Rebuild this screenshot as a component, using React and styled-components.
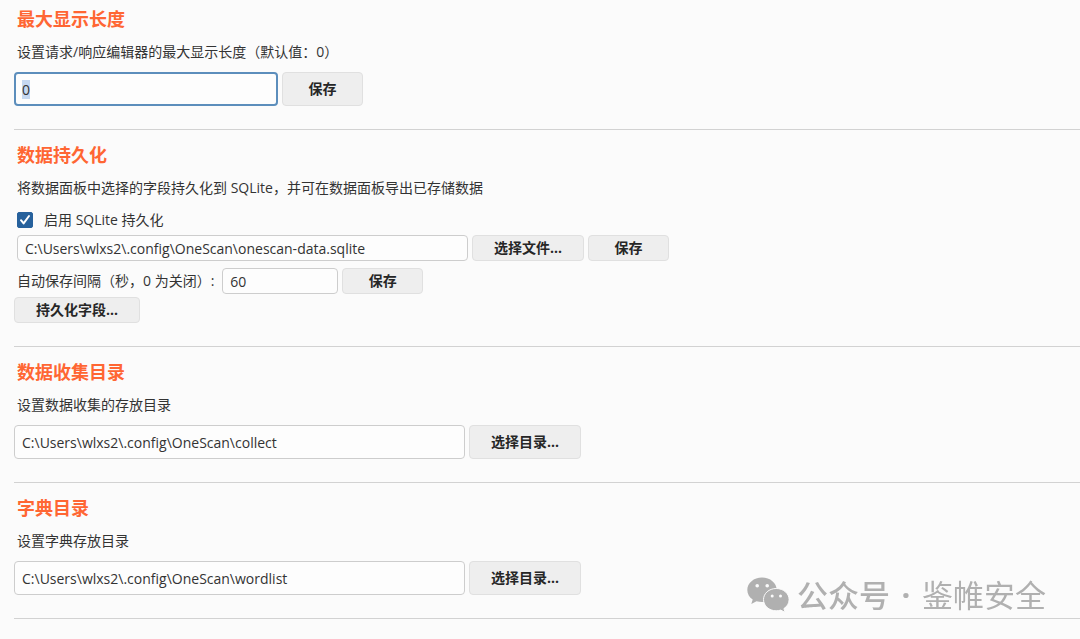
import { useEffect, useRef, useState } from 'react';
import styled, { createGlobalStyle } from 'styled-components';

const App = () => {
  const lengthRef = useRef(null);
  const [maxLength, setMaxLength] = useState('0');
  const [persist, setPersist] = useState(true);
  const [dbPath, setDbPath] = useState(
    'C:\\Users\\wlxs2\\.config\\OneScan\\onescan-data.sqlite'
  );
  const [saveInterval, setSaveInterval] = useState('60');

  useEffect(() => {
    lengthRef.current.focus();
    lengthRef.current.select();
  }, []);

  return (
    <>
      <GlobalStyle />
      <Page>
        <Section>
          <Title>最大显示长度</Title>
          <Description as="label" htmlFor="max-length">
            设置请求/响应编辑器的最大显示长度（默认值：0）
          </Description>
          <Row>
            <TextInput
              id="max-length"
              ref={lengthRef}
              $width={264}
              $tall
              value={maxLength}
              onChange={(e) => setMaxLength(e.target.value)}
            />
            <Button type="button" $tall>
              保存
            </Button>
          </Row>
        </Section>

        <Section>
          <Title>数据持久化</Title>
          <Description>
            将数据面板中选择的字段持久化到 SQLite，并可在数据面板导出已存储数据
          </Description>
          <Options>
            <CheckLabel>
              <Checkbox
                type="checkbox"
                checked={persist}
                onChange={(e) => setPersist(e.target.checked)}
              />
              启用 SQLite 持久化
            </CheckLabel>
            <Row $inset>
              <TextInput
                aria-label="SQLite 文件"
                $width={451}
                value={dbPath}
                onChange={(e) => setDbPath(e.target.value)}
              />
              <Button type="button">选择文件...</Button>
              <Button type="button">保存</Button>
            </Row>
            <Row $inset $spaced>
              <IntervalLabel htmlFor="save-interval">
                自动保存间隔（秒，0 为关闭）:
              </IntervalLabel>
              <TextInput
                id="save-interval"
                $width={116}
                value={saveInterval}
                onChange={(e) => setSaveInterval(e.target.value)}
              />
              <Button type="button">保存</Button>
            </Row>
            <Row>
              <Button type="button">持久化字段...</Button>
            </Row>
          </Options>
        </Section>

        <DirectorySection
          id="collect-dir"
          title="数据收集目录"
          description="设置数据收集的存放目录"
          path={'C:\\Users\\wlxs2\\.config\\OneScan\\collect'}
        />
        <DirectorySection
          id="wordlist-dir"
          title="字典目录"
          description="设置字典存放目录"
          path={'C:\\Users\\wlxs2\\.config\\OneScan\\wordlist'}
        />
      </Page>
      <Watermark>
        <WechatIcon />
        <Channel>公众号</Channel>
        <Dot>·</Dot>
        <span>鉴帷安全</span>
      </Watermark>
    </>
  );
};

const DirectorySection = ({ id, title, description, path }) => {
  const [value, setValue] = useState(path);

  return (
    <Section>
      <Title>{title}</Title>
      <Description as="label" htmlFor={id}>
        {description}
      </Description>
      <Row>
        <TextInput
          id={id}
          $width={451}
          $tall
          value={value}
          onChange={(e) => setValue(e.target.value)}
        />
        <Button type="button" $tall>
          选择目录...
        </Button>
      </Row>
    </Section>
  );
};

const WechatIcon = () => (
  <svg viewBox="0 0 42 35" aria-hidden="true">
    <path
      fill="currentColor"
      d="M15 0.5C6.8 0.5 0.3 6 0.3 13c0 4 2.1 7.3 5.4 9.6L4.3 27l5.2-2.7c1.8.5 3.6.8 5.5.8C23.2 25.1 29.7 20 29.7 13S23.2 0.5 15 0.5Z"
    />
    <path
      fill="currentColor"
      stroke="#fbfbfb"
      strokeWidth="1"
      d="M29.2 11.5c-7.2 0-12.7 4.9-12.7 11.1s5.5 11.2 12.7 11.2c1.6 0 3.1-.3 4.5-.7l4.4 2.3-1.2-3.8c3.2-2 5.2-5.2 5.2-9 0-6.2-5.7-11.1-12.9-11.1Z"
    />
    <g fill="#fbfbfb">
      <circle cx="10.2" cy="8.8" r="1.8" />
      <circle cx="20.2" cy="8.8" r="1.8" />
      <circle cx="25.2" cy="19.1" r="1.5" />
      <circle cx="33.5" cy="19.1" r="1.5" />
    </g>
  </svg>
);

const GlobalStyle = createGlobalStyle`
  * {
    box-sizing: border-box;
  }

  body {
    margin: 0;
    background: #fbfbfb;
    color: #333;
    font-family: 'Open Sans', 'Noto Sans CJK SC', sans-serif;
    font-size: 14px;
    line-height: 20px;
  }
`;

const Page = styled.main`
  padding-left: 14px;
`;

const Section = styled.section`
  padding: 13px 0 23px;
  border-bottom: 1px solid #d2d2d2;

  &:first-child {
    padding-top: 7px;
  }
`;

const Title = styled.h2`
  margin: 0 0 11px;
  padding-left: 3px;
  color: #ff6633;
  font-size: 18px;
  line-height: 24px;
  font-weight: 700;
`;

const Description = styled.p`
  display: block;
  margin: 0 0 10px;
  padding-left: 3px;
`;

const Options = styled.div`
  display: flex;
  flex-direction: column;
  gap: 3px;
`;

const Row = styled.div`
  display: flex;
  align-items: center;
  gap: 4px;
  padding-top: ${({ $spaced }) => ($spaced ? '4px' : '0')};
  padding-left: ${({ $inset }) => ($inset ? '3px' : '0')};
`;

const TextInput = styled.input`
  width: ${({ $width }) => $width}px;
  height: ${({ $tall }) => ($tall ? '34px' : '26px')};
  padding: 0 7px;
  border: 1px solid #cdcdcd;
  border-radius: 4px;
  background: #fdfdfd;
  color: #333;
  font: inherit;
  outline: none;

  &:focus {
    padding: 0 6px;
    border: 2px solid #5c8ebc;
  }

  &::selection {
    background: #c5d8f1;
    color: #333;
  }
`;

const Button = styled.button`
  min-width: 81px;
  height: ${({ $tall }) => ($tall ? '34px' : '26px')};
  padding: 0 21px;
  border: 1px solid #e0e0e0;
  border-radius: 4px;
  background: #eee;
  color: #262626;
  font: inherit;
  font-weight: 700;
`;

const CheckLabel = styled.label`
  display: flex;
  align-items: center;
  align-self: flex-start;
  gap: 11px;
  height: 24px;
  padding-left: 3px;
`;

const Checkbox = styled.input`
  appearance: none;
  width: 16px;
  height: 16px;
  margin: 0;
  border: 1px solid #26619c;
  border-radius: 2px;
  background: #fff;

  &:checked {
    background: #26619c
      url("data:image/svg+xml,%3Csvg xmlns='http://www.w3.org/2000/svg' viewBox='0 0 14 14' fill='none' stroke='white' stroke-width='2' stroke-linecap='round' stroke-linejoin='round'%3E%3Cpath d='M3 7.2 5.6 10.4 11 3'/%3E%3C/svg%3E")
      center / 14px no-repeat;
  }
`;

const IntervalLabel = styled.label`
  margin-right: 4px;
`;

const Watermark = styled.div`
  position: fixed;
  right: 34px;
  bottom: 23px;
  display: flex;
  align-items: center;
  color: #b0b0b0;
  font-family: 'Noto Sans CJK SC', sans-serif;
  font-size: 31px;
  line-height: 44px;
  pointer-events: none;

  svg {
    width: 42px;
    height: 35px;
    margin-right: 8px;
  }
`;

const Channel = styled.span`
  font-weight: 500;
`;

const Dot = styled.span`
  width: 32px;
  font-family: 'Open Sans', sans-serif;
  font-weight: 700;
  text-align: center;
`;

export default App;
